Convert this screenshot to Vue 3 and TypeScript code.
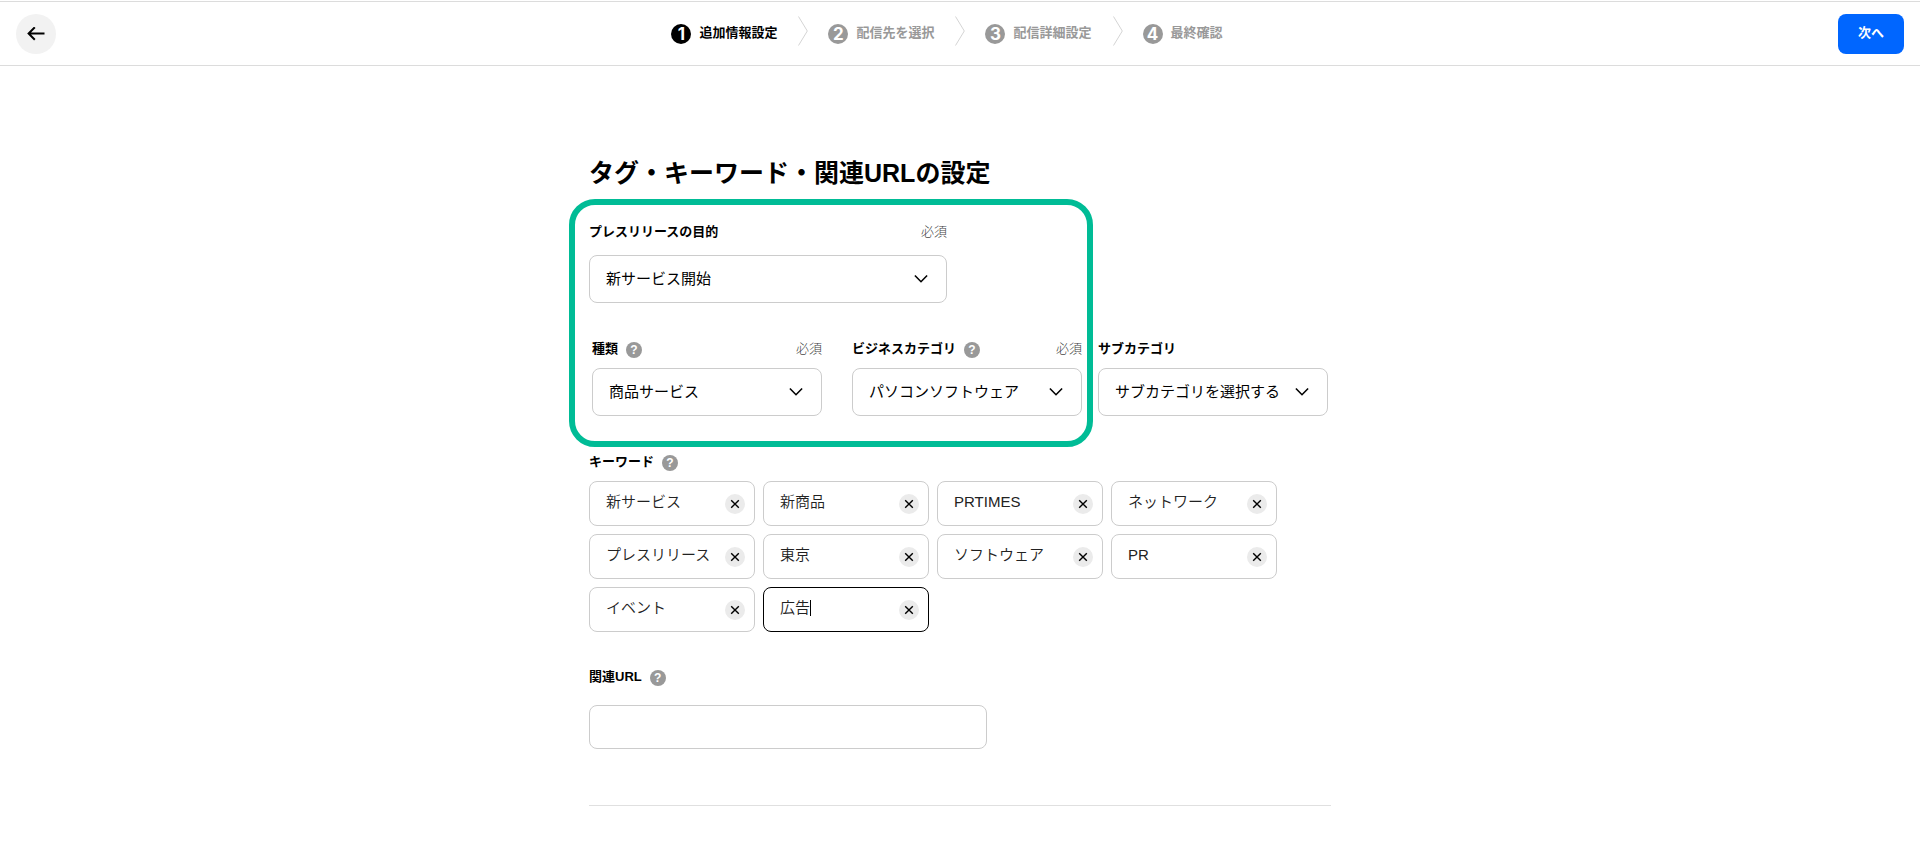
<script setup lang="ts">
import { ref } from 'vue'

interface Step {
  no: number
  label: string
}

interface Category {
  id: string
  label: string
  value: string
  help: boolean
  required: boolean
}

const steps: Step[] = [
  { no: 1, label: '追加情報設定' },
  { no: 2, label: '配信先を選択' },
  { no: 3, label: '配信詳細設定' },
  { no: 4, label: '最終確認' },
]
const currentStep = ref(1)

const purpose = ref('新サービス開始')

const categories = ref<Category[]>([
  { id: 'kind', label: '種類', value: '商品サービス', help: true, required: true },
  { id: 'business', label: 'ビジネスカテゴリ', value: 'パソコンソフトウェア', help: true, required: true },
  { id: 'sub', label: 'サブカテゴリ', value: 'サブカテゴリを選択する', help: false, required: false },
])

const keywords = ref<string[]>([
  '新サービス', '新商品', 'PRTIMES', 'ネットワーク',
  'プレスリリース', '東京', 'ソフトウェア', 'PR',
  'イベント', '広告',
])
const activeKeyword = ref(9)
const relatedUrl = ref('')

function removeKeyword(index: number): void {
  keywords.value.splice(index, 1)
}
</script>

<template>
  <div class="page">
    <header class="header">
      <button class="back" type="button" aria-label="戻る">
        <svg width="18" height="14" viewBox="0 0 18 14" fill="none" stroke="#000" stroke-width="2">
          <path d="M17.5 6.5H1.8M7.8 .3L1.6 6.5l6.2 6.2" />
        </svg>
      </button>
      <ol class="steps">
        <li v-for="(step, i) in steps" :key="step.no" class="step" :class="{ current: step.no === currentStep }">
          <svg v-if="i > 0" class="divider" width="10" height="30" viewBox="0 0 10 30" fill="none" stroke="#d4d4d4">
            <path d="M.5 .5L9.3 15 .5 29.5" />
          </svg>
          <span class="number">{{ step.no }}</span>
          <span class="step-label">{{ step.label }}</span>
        </li>
      </ol>
      <button class="next" type="button">次へ</button>
    </header>

    <main class="main">
      <h1 class="title">タグ・キーワード・関連URLの設定</h1>

      <section class="classification">
        <div class="purpose">
          <div class="label-row">
            <label for="purpose">プレスリリースの目的</label>
            <span class="required">必須</span>
          </div>
          <div class="select">
            <select id="purpose" v-model="purpose">
              <option>新サービス開始</option>
            </select>
            <svg class="arrow" width="14" height="10" viewBox="0 0 14 10" fill="none" stroke="#000" stroke-width="1.6">
              <path d="M.9 1.5L7 7.7l6.1-6.2" />
            </svg>
          </div>
        </div>

        <div class="categories">
          <div v-for="item in categories" :key="item.id" class="category">
            <div class="label-row">
              <label :for="item.id">{{ item.label }}</label>
              <button v-if="item.help" class="help" type="button" :aria-label="item.label + 'のヘルプ'">?</button>
              <span v-if="item.required" class="required">必須</span>
            </div>
            <div class="select">
              <select :id="item.id" v-model="item.value">
                <option>{{ item.value }}</option>
              </select>
              <svg class="arrow" width="14" height="10" viewBox="0 0 14 10" fill="none" stroke="#000" stroke-width="1.6">
                <path d="M.9 1.5L7 7.7l6.1-6.2" />
              </svg>
            </div>
          </div>
        </div>
        <div class="highlight" aria-hidden="true"></div>
      </section>

      <section class="keywords">
        <div class="label-row">
          <label for="keyword-0">キーワード</label>
          <button class="help" type="button" aria-label="キーワードのヘルプ">?</button>
        </div>
        <ul class="keyword-list">
          <li v-for="(_, i) in keywords" :key="i" class="keyword" :class="{ active: i === activeKeyword }">
            <div class="entry">
              <input
                :id="'keyword-' + i"
                v-model="keywords[i]"
                type="text"
                :aria-label="'キーワード' + (i + 1)"
                @focus="activeKeyword = i"
              />
              <span v-if="i === activeKeyword" class="caret"></span>
            </div>
            <button class="remove" type="button" aria-label="削除" @click="removeKeyword(i)">
              <svg width="10" height="10" viewBox="0 0 10 10" stroke="#000" stroke-width="1.4">
                <path d="M1.2 1.2l7.6 7.6M8.8 1.2L1.2 8.8" />
              </svg>
            </button>
          </li>
        </ul>
      </section>

      <section class="related">
        <div class="label-row">
          <label for="related-url">関連URL</label>
          <button class="help" type="button" aria-label="関連URLのヘルプ">?</button>
        </div>
        <input id="related-url" v-model="relatedUrl" class="url" type="url" />
      </section>
    </main>
  </div>
</template>

<style>
body {
  margin: 0;
  background: #fff;
}
</style>

<style scoped>
.page {
  padding-top: 1px;
  color: #000;
  font-family: "Liberation Sans", "Noto Sans CJK JP", sans-serif;
  font-size: 13px;
  line-height: 20px;
}

.page * {
  box-sizing: border-box;
}

button,
input,
select {
  margin: 0;
  padding: 0;
  border: 0;
  color: inherit;
  background: transparent;
  font: inherit;
}

button {
  cursor: pointer;
}

ol,
ul {
  margin: 0;
  padding: 0;
  list-style: none;
}

.header {
  display: flex;
  justify-content: space-between;
  padding: 12px 16px 11px;
  border-top: 1px solid #dcdcdc;
  border-bottom: 1px solid #dcdcdc;
}

.back {
  display: flex;
  align-items: center;
  justify-content: center;
  width: 40px;
  height: 40px;
  border-radius: 50%;
  background: #f2f2f2;
}

.next {
  height: 40px;
  padding: 0 20px 2px;
  border-radius: 8px;
  background: #06f;
  color: #fff;
  font-weight: 700;
}

.steps {
  display: flex;
  align-items: center;
  gap: 21px;
}

.step {
  display: flex;
  align-items: center;
  gap: 8px;
  color: #999;
  font-weight: 700;
}

.step.current {
  color: #000;
}

.step-label {
  padding-bottom: 2px;
}

.divider {
  margin: 0 12px 6px 0;
}

.number {
  width: 20px;
  height: 20px;
  border-radius: 50%;
  background: #999;
  color: #fff;
  font-family: Inter, sans-serif;
  font-size: 17px;
  text-align: center;
}

.current .number {
  background: #000;
}

.main {
  max-width: 742px;
  margin: 0 auto;
  padding: 89px 0 44px;
}

.title {
  margin: 0 0 31px;
  font-size: 25px;
  font-weight: 700;
  line-height: 36px;
}

.label-row {
  display: flex;
  align-items: center;
  gap: 8px;
  margin-bottom: 9px;
}

.label-row label {
  font-weight: 700;
}

.required {
  margin-left: auto;
  color: #444;
  font-weight: 300;
}

.help {
  width: 16px;
  height: 16px;
  margin-top: 2px;
  border-radius: 50%;
  background: #999;
  color: #fff;
  font-size: 12px;
  font-weight: 700;
  line-height: 16px;
  text-align: center;
}

.classification {
  position: relative;
}

.highlight {
  position: absolute;
  inset: -23px 238px -31px -20px;
  border: 6px solid #00bc96;
  border-radius: 26px;
  pointer-events: none;
}

.purpose {
  max-width: 358px;
}

.purpose .label-row {
  margin-bottom: 13px;
}

.select {
  display: grid;
  align-items: center;
}

.select select,
.select .arrow {
  grid-area: 1 / 1;
}

.select select {
  width: 100%;
  height: 48px;
  padding: 0 40px 0 16px;
  border: 1px solid #ccc;
  border-radius: 8px;
  appearance: none;
  font-size: 15px;
}

.arrow {
  justify-self: end;
  margin-right: 19px;
  pointer-events: none;
}

.categories {
  display: flex;
  gap: 16px;
  margin-top: 36px;
  padding: 0 3px;
}

.category {
  flex: 1;
}

.category:first-child {
  margin-right: 14px;
}

.keywords {
  margin-top: 36px;
}

.keyword-list {
  display: grid;
  grid-template-columns: repeat(auto-fill, 166px);
  gap: 8px;
}

.keyword {
  display: flex;
  align-items: center;
  height: 45px;
  padding: 0 9px 0 16px;
  border: 1px solid #ccc;
  border-radius: 8px;
  color: #222;
  font-size: 15px;
  font-weight: 350;
}

.keyword.active {
  border-color: #000;
}

.entry {
  display: flex;
  flex: 1;
  align-items: center;
  min-width: 0;
  padding-bottom: 3px;
}

.entry input {
  width: 100%;
  outline: 0;
}

.active input {
  width: auto;
  field-sizing: content;
  caret-color: transparent;
}

.caret {
  width: 1px;
  height: 16px;
  background: #000;
}

.remove {
  display: flex;
  flex: none;
  align-items: center;
  justify-content: center;
  width: 20px;
  height: 20px;
  border-radius: 50%;
  background: #ebebeb;
}

.related {
  margin-top: 35px;
  padding-bottom: 56px;
  border-bottom: 1px solid #e0e0e0;
}

.related .label-row {
  margin-bottom: 18px;
}

.url {
  display: block;
  width: 100%;
  max-width: 398px;
  height: 44px;
  padding: 0 16px;
  border: 1px solid #ccc;
  border-radius: 8px;
  font-size: 15px;
}
</style>
